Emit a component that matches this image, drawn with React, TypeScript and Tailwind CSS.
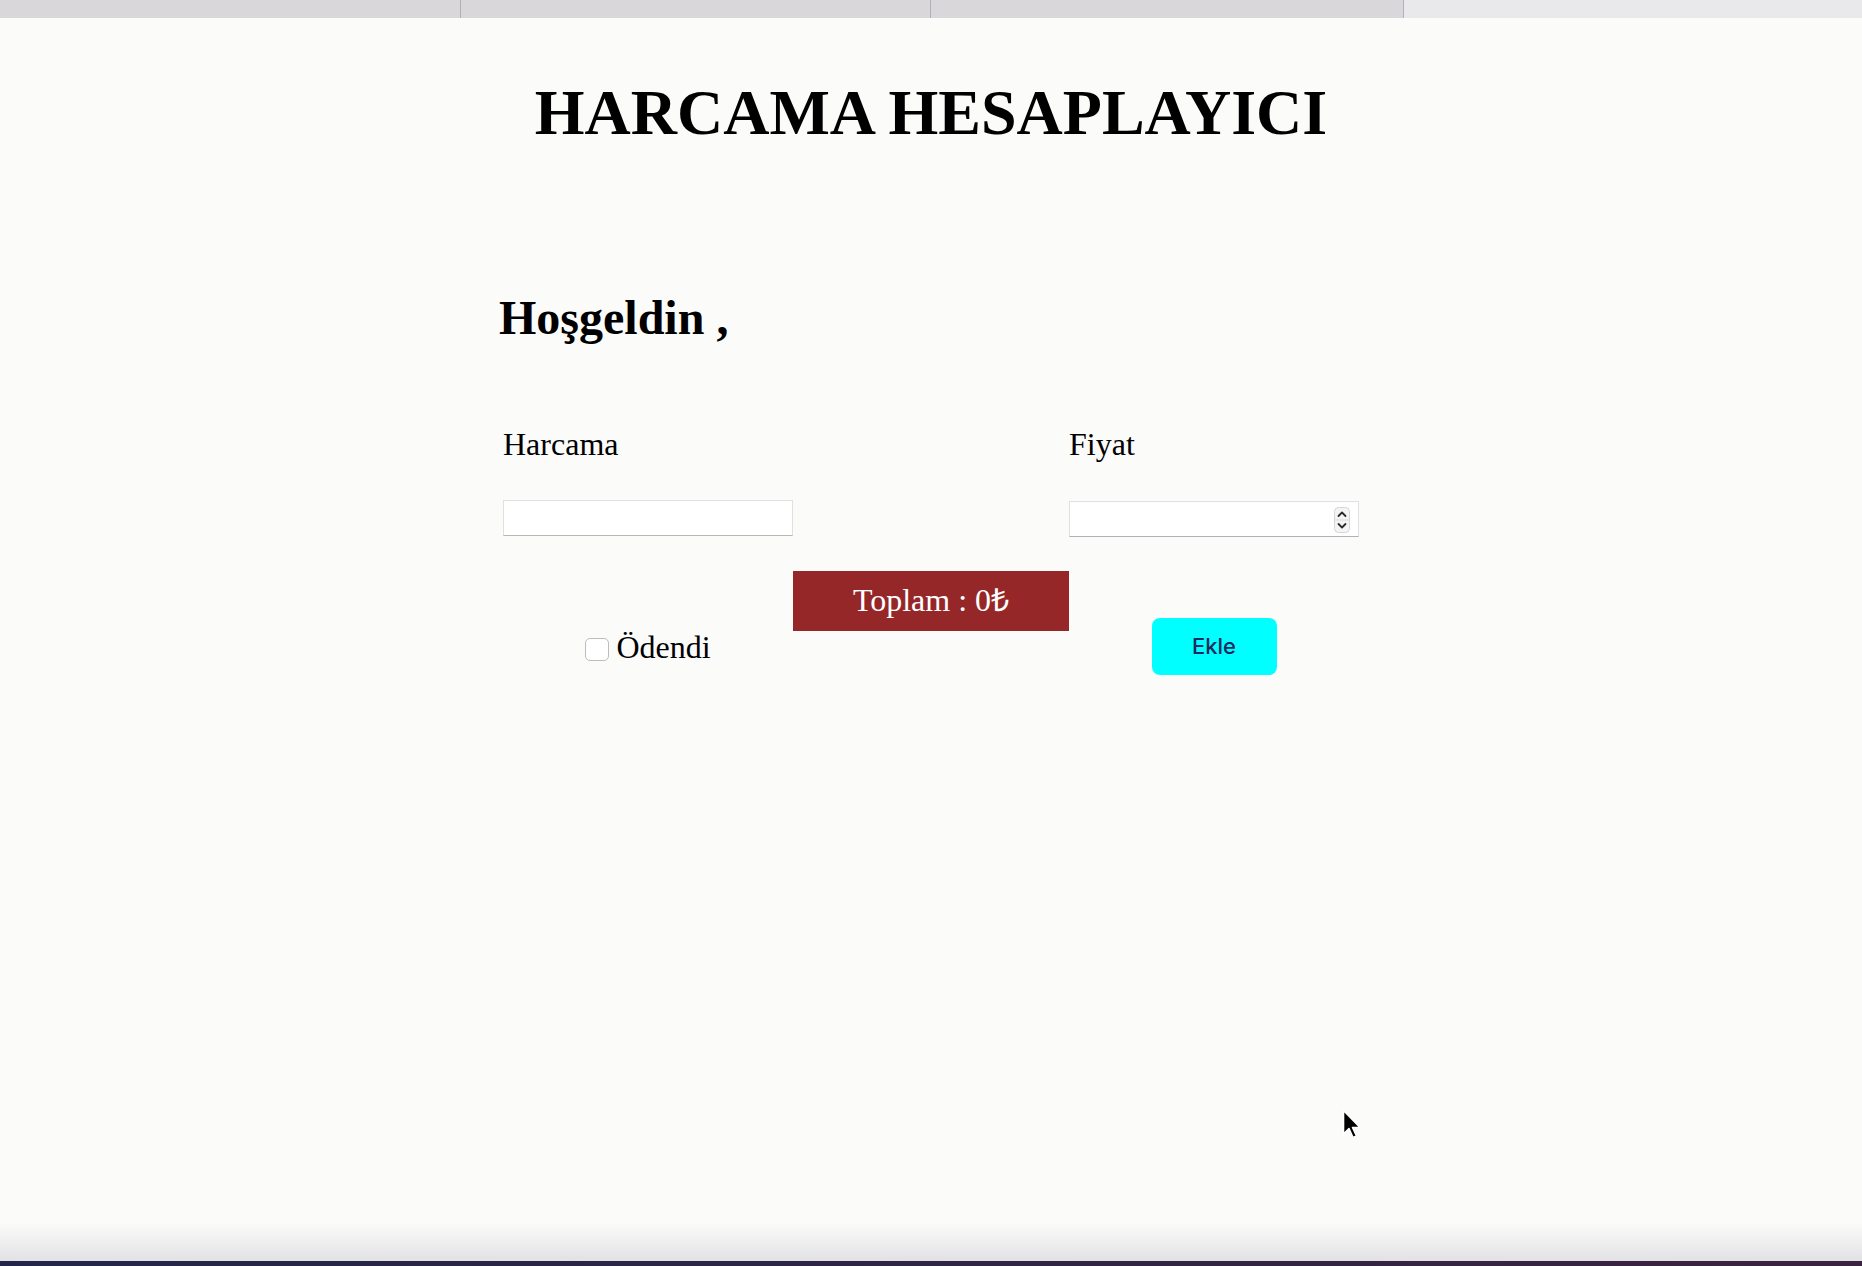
import { useState } from "react"

function Spinner() {
  return (
    <svg width="16" height="26" viewBox="0 0 16 26" className="block">
      <rect x="0.5" y="0.5" width="15" height="25" rx="4" fill="#f4f4f4" stroke="#d6d6d6" />
      <line x1="1" y1="13" x2="15" y2="13" stroke="#dcdcdc" />
      <path d="M4.5 9 L8 5.5 L11.5 9" fill="none" stroke="#2b2b2b" strokeWidth="1.8" strokeLinecap="round" strokeLinejoin="round" />
      <path d="M4.5 17 L8 20.5 L11.5 17" fill="none" stroke="#2b2b2b" strokeWidth="1.8" strokeLinecap="round" strokeLinejoin="round" />
    </svg>
  )
}

function Cursor() {
  return (
    <svg width="22" height="32" viewBox="0 0 22 32">
      <path
        d="M1.5 1.5 L1.5 25 L7 19.5 L11 28.5 L14.5 27 L10.5 18.5 L18 18.5 Z"
        fill="#000"
        stroke="#fff"
        strokeWidth="1.6"
        strokeLinejoin="round"
      />
    </svg>
  )
}

export default function App() {
  const [name, setName] = useState("")
  const [price, setPrice] = useState("")
  const [paid, setPaid] = useState(false)

  return (
    <div className="relative flex h-[1266px] flex-col overflow-hidden bg-[#fbfbfa] font-['Liberation_Serif','Times_New_Roman',serif] text-black">
      {/* browser tab strip, cut off at the top */}
      <div className="flex h-[18px] shrink-0 bg-[#d9d7da]">
        <div className="w-[461px] border-r border-[#b3b1b5]" />
        <div className="w-[470px] border-r border-[#b3b1b5]" />
        <div className="w-[473px] border-r border-[#b3b1b5]" />
        <div className="flex-1 bg-[#e9e8ea]" />
      </div>

      <main className="flex-1">
        <h1 className="mt-[63px] text-center text-[64px] font-bold leading-none">HARCAMA HESAPLAYICI</h1>

        <div className="mx-auto w-[856px]">
          <h2 className="-ml-[4px] mt-[149px] text-[48px] font-bold leading-none">Hoşgeldin ,</h2>

          <div className="mt-[86px] grid grid-cols-[290px_276px_290px]">
            <label className="text-[32px] leading-none">Harcama</label>
            <div />
            <label className="text-[32px] leading-none">Fiyat</label>

            <input
              value={name}
              onChange={(e) => setName(e.target.value)}
              className="mt-[40px] h-[36px] w-[290px] border border-[#e0e0e0] border-b-[#b8b8b8] bg-white px-2 text-[26px] outline-none"
            />
            <div />
            <div className="relative mt-[41px] h-[36px] w-[290px]">
              <input
                value={price}
                onChange={(e) => setPrice(e.target.value)}
                className="h-full w-full border border-[#e0e0e4] border-b-[#b0b0bb] bg-white px-2 pr-8 text-[26px] outline-none"
              />
              <div className="absolute right-[9px] top-[6px]">
                <Spinner />
              </div>
            </div>

            <div className="mt-[34px] flex items-center justify-center gap-[7px] pt-[48px]">
              <input
                type="checkbox"
                checked={paid}
                onChange={(e) => setPaid(e.target.checked)}
                className="mt-[5px] h-[23px] w-[24px] appearance-none rounded-[5px] border border-[#bdbdbd] bg-white checked:bg-[#3b82f6]"
              />
              <span className="text-[32px] leading-none">Ödendi</span>
            </div>
            <div className="mt-[34px] flex h-[60px] items-center justify-center bg-[#962729] pb-[3px] text-[32px] leading-none text-white">
              Toplam : 0₺
            </div>
            <div className="mt-[34px] flex justify-center pt-[47px]">
              <button className="h-[57px] w-[125px] rounded-[8px] bg-[#00ffff] font-['Inter',sans-serif] text-[22px] font-medium text-[#1c2a5c]">
                Ekle
              </button>
            </div>
          </div>
        </div>
      </main>

      <div className="h-[38px] shrink-0 bg-gradient-to-b from-[#fbfbfa] to-[#e2e2e5]" />
      <div className="h-[5px] shrink-0 bg-gradient-to-r from-[#23264a] to-[#3a2340]" />

      {/* mouse pointer */}
      <div className="pointer-events-none absolute left-[1342px] top-[1109px]">
        <Cursor />
      </div>
    </div>
  )
}
